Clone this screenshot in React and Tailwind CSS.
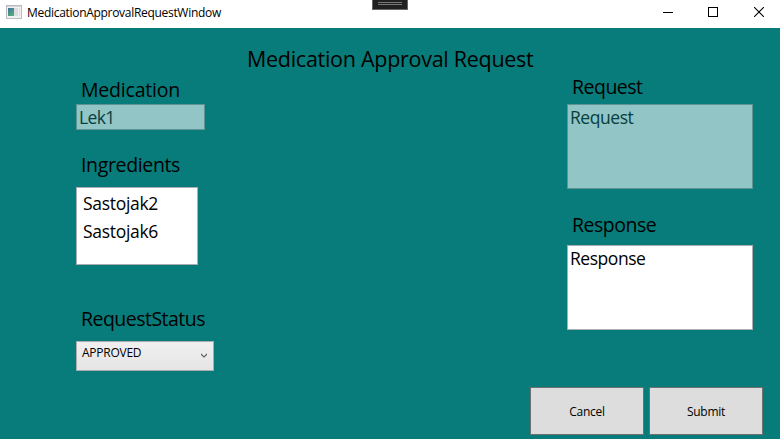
function TitleBar() {
  return (
    <header className="relative flex h-7 shrink-0 items-start bg-white">
      <svg className="ml-[6px] mt-[5px]" width="16" height="14" viewBox="0 0 16 14" shapeRendering="crispEdges">
        <defs>
          <linearGradient id="pane" x1="0" y1="0" x2="0.6" y2="1">
            <stop offset="0" stopColor="#3f6fa0" />
            <stop offset="1" stopColor="#58ab78" />
          </linearGradient>
        </defs>
        <rect x="0.5" y="0.5" width="15" height="13" fill="#f1f1f3" stroke="#b9bcc0" />
        <rect x="1" y="1" width="14" height="1" fill="#d3d6da" />
        <rect x="2" y="3" width="6" height="8" fill="url(#pane)" />
        <rect x="8" y="3" width="4" height="8" fill="#dcdde0" />
        <rect x="13" y="3" width="1" height="8" fill="#dcdde0" />
      </svg>
      <span className="ml-[5px] mt-[5px] text-[12px] leading-4 tracking-[-0.3px] text-black">MedicationApprovalRequestWindow</span>
      <div className="absolute left-[372px] top-0 flex h-[10px] w-9 flex-col items-center border border-t-0 border-[#666] bg-[#202020] pt-[2px]">
        <span className="h-px w-6 bg-[#777]" />
        <span className="mt-px h-px w-6 bg-[#777]" />
      </div>
      <div className="ml-auto mr-[16px] flex items-center pt-[7px]">
        <svg width="10" height="10" viewBox="0 0 10 10" shapeRendering="crispEdges">
          <path d="M0 5.5h10" stroke="#000" />
        </svg>
        <svg className="ml-[35px]" width="10" height="10" viewBox="0 0 10 10" shapeRendering="crispEdges">
          <rect x="0.5" y="0.5" width="9" height="9" fill="none" stroke="#000" />
        </svg>
        <svg className="ml-9" width="10" height="10" viewBox="0 0 10 10">
          <path d="M0 0l10 10M10 0L0 10" stroke="#000" strokeWidth="1.1" />
        </svg>
      </div>
    </header>
  );
}

export default function App() {
  return (
    <div className="flex h-[439px] w-[780px] flex-col overflow-hidden whitespace-nowrap bg-[#087c7a] font-['Open_Sans','Noto_Sans',sans-serif] text-black">
      <TitleBar />
      <main className="flex flex-col">
        <h1 className="mb-[-1px] ml-[247px] mt-[17px] text-[21.5px] leading-7 tracking-[-0.28px]">Medication Approval Request</h1>
        <div className="flex pl-[76px]">
          <section className="flex w-[138px] flex-col pt-1">
            <h2 className="pl-[5px] text-[19.5px] leading-7 tracking-[-0.2px]">Medication</h2>
            <div className="h-[26px] w-[129px] border border-[#5f9494] bg-[#92c5c5] pl-[2px] text-[17.5px] leading-[25px] tracking-[-0.6px] text-[#06403f]">Lek1</div>
            <h2 className="mt-[21px] pl-[5px] text-[19.5px] leading-7 tracking-[-0.35px]">Ingredients</h2>
            <ul className="mt-2 h-[78px] w-[122px] border border-[#abadb3] bg-white pl-[6px] pt-[1px] text-[17.5px] leading-7 tracking-[-0.3px]">
              <li>Sastojak2</li>
              <li>Sastojak6</li>
            </ul>
            <h2 className="mt-10 pl-[5px] text-[19.5px] leading-7 tracking-[-0.52px]">RequestStatus</h2>
            <div className="mt-2 flex h-[30px] w-[138px] justify-between border border-[#acacac] bg-linear-to-b from-[#f0f0f0] to-[#e5e5e5] pl-[5px] pr-[6px]">
              <span className="mt-[3px] text-[12px] leading-4 tracking-[-0.25px]">APPROVED</span>
              <svg className="mt-[11px]" width="6" height="5" viewBox="0 0 6 5">
                <path d="M0.5 0.7v1L3 4l2.500-2.300v-1" fill="none" stroke="#606060" strokeWidth="1.200" />
              </svg>
            </div>
          </section>
          <section className="ml-[353px] flex w-[186px] flex-col pt-px">
            <h2 className="pl-[5px] text-[19.5px] leading-7 tracking-[-0.5px]">Request</h2>
            <div className="mt-[3px] h-[85px] border border-[#5f9494] bg-[#92c5c5] pl-[2px] text-[17.5px] leading-[25px] tracking-[-0.45px] text-[#06403f]">Request</div>
            <h2 className="mt-[22px] pl-[5px] text-[19.5px] leading-7 tracking-[-0.5px]">Response</h2>
            <div className="mt-[6px] h-[85px] border border-[#abadb3] bg-white pl-[2px] text-[17.5px] leading-[25px] tracking-[-0.45px]">Response</div>
          </section>
        </div>
        <footer className="mt-4 flex gap-[5px] pl-[530px]">
          <button className="h-12 w-[114px] border border-[#707070] bg-[#ddd] pt-[2px] text-[12px] leading-4 tracking-[-0.25px]">Cancel</button>
          <button className="h-12 w-[114px] border border-[#707070] bg-[#ddd] pt-[2px] text-[12px] leading-4 tracking-[-0.25px]">Submit</button>
        </footer>
      </main>
    </div>
  );
}
